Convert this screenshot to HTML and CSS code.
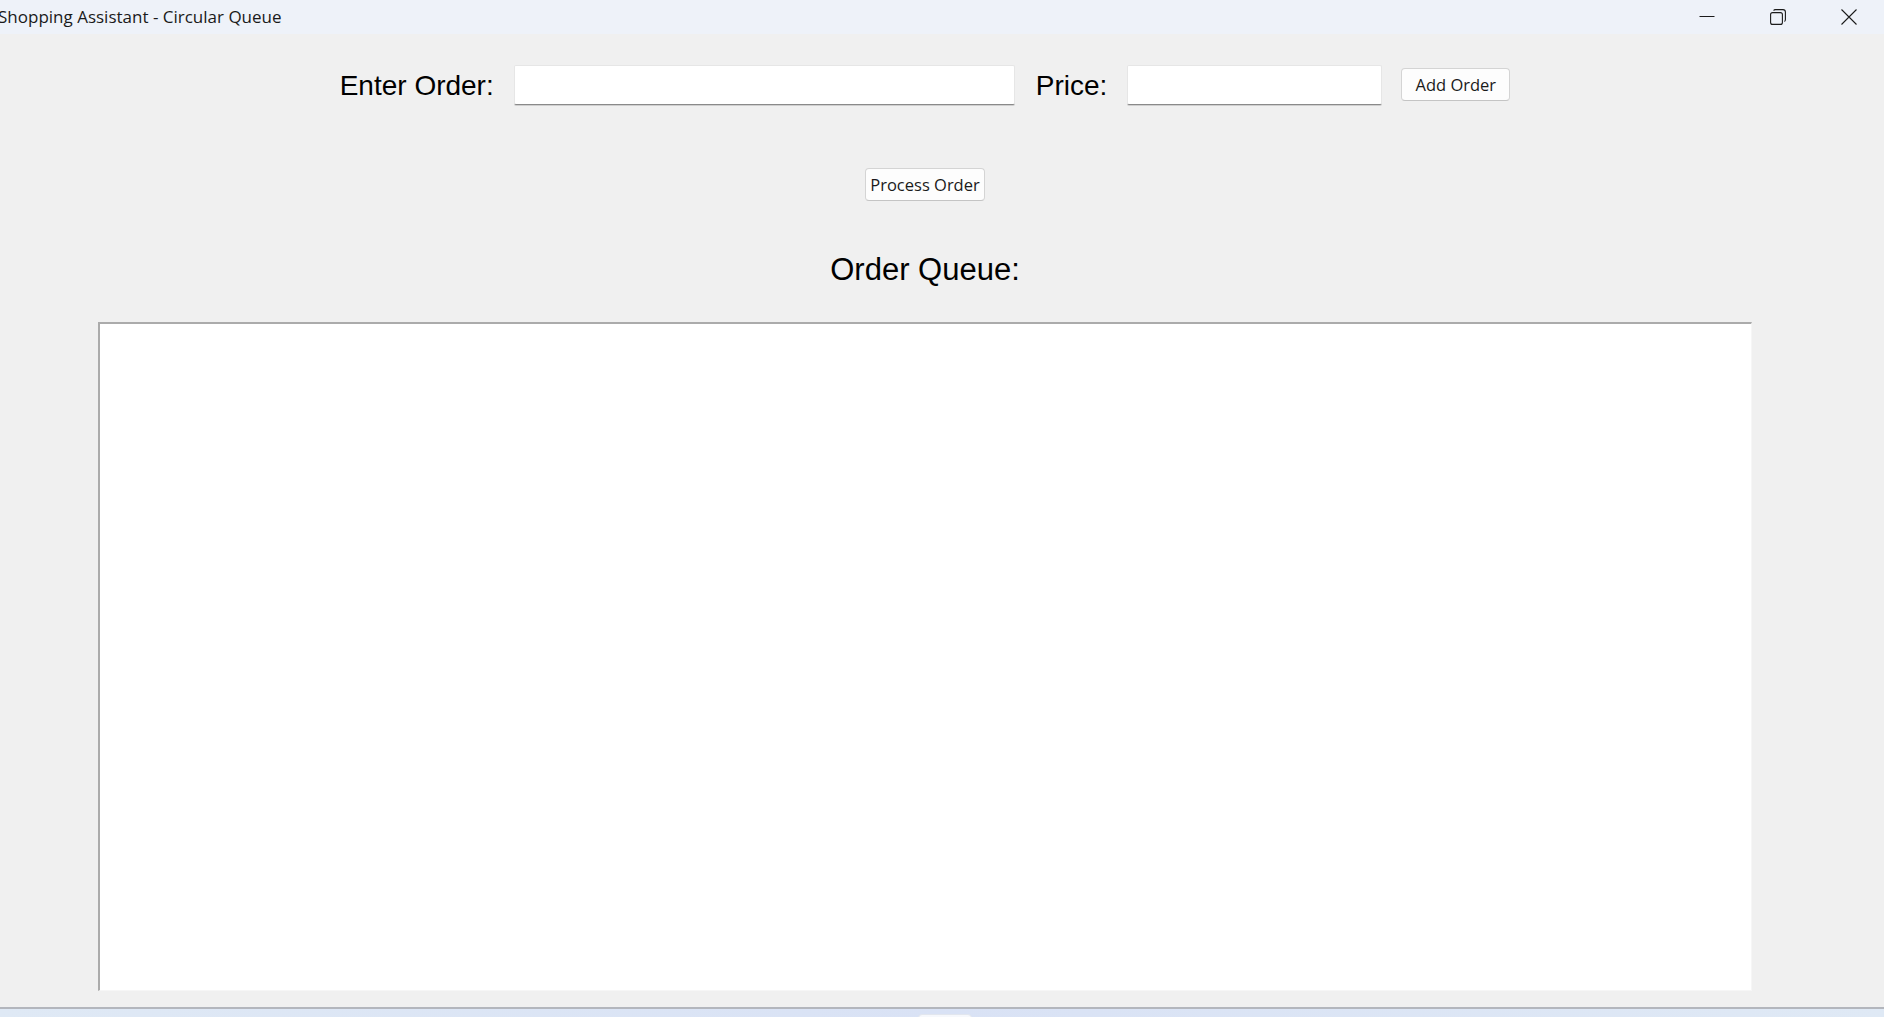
FILE: index.html
```html
<!DOCTYPE html>
<html lang="en">
<head>
<meta charset="utf-8">
<title>Shopping Assistant - Circular Queue</title>
<link rel="stylesheet" href="styles.css">
</head>
<body>
<div class="window">
  <header class="titlebar">
    <span class="title">Shopping Assistant - Circular Queue</span>
    <div class="controls">
      <span class="ctrl">
        <svg width="16" height="16" viewBox="0 0 16 16"><path d="M0.5 7.5H15.5" stroke="#1b1b1b" stroke-width="1" fill="none"/></svg>
      </span>
      <span class="ctrl">
        <svg width="16" height="16" viewBox="0 0 16 16" fill="none" stroke="#1b1b1b" stroke-width="1.1">
          <rect x="0.6" y="3.6" width="11.8" height="11.8" rx="2"/>
          <path d="M3.6 1.6 Q4 0.6 5.5 0.6 H13 Q15.4 0.6 15.4 3 V10.5 Q15.4 12 14.4 12.4"/>
        </svg>
      </span>
      <span class="ctrl">
        <svg width="16" height="16" viewBox="0 0 16 16"><path d="M0.5 0.5L15.5 15.5M15.5 0.5L0.5 15.5" stroke="#1b1b1b" stroke-width="1.1" fill="none"/></svg>
      </span>
    </div>
  </header>

  <main class="content">
    <div class="form-row">
      <label class="field-label" for="order">Enter Order:</label>
      <input class="entry entry-order" id="order" type="text">
      <label class="field-label" for="price">Price:</label>
      <input class="entry entry-price" id="price" type="text">
      <button class="btn btn-add" type="button">Add Order</button>
    </div>
    <button class="btn btn-process" type="button">Process Order</button>
    <h2 class="queue-title">Order Queue:</h2>
    <div class="listbox"></div>
  </main>

  <footer class="taskbar"><span class="task-item"></span></footer>
</div>
</body>
</html>
```

FILE: styles.css
```css
* { box-sizing: border-box; }
html, body { margin: 0; padding: 0; }
body {
  width: 1884px;
  height: 1017px;
  overflow: hidden;
  background: #f0f0f0;
  font-family: "Liberation Sans", Arial, sans-serif;
}
.window {
  display: flex;
  flex-direction: column;
  height: 1017px;
}
.titlebar {
  height: 34px;
  flex: 0 0 34px;
  background: #eef2f9;
  display: flex;
  align-items: center;
  justify-content: space-between;
  overflow: hidden;
}
.title {
  margin-left: -2px;
  margin-top: -2px;
  font-family: "Open Sans", "Noto Sans", sans-serif;
  font-size: 17px;
  color: #1a1a1a;
  white-space: nowrap;
}
.controls {
  display: flex;
  height: 100%;
}
.ctrl {
  width: 71px;
  height: 100%;
  display: flex;
  align-items: center;
  justify-content: center;
}
.content {
  flex: 1;
  width: 1850px;
  display: flex;
  flex-direction: column;
  align-items: center;
  padding-top: 31px;
}
.form-row {
  display: flex;
  align-items: center;
  height: 40px;
}
.field-label {
  font-size: 28px;
  line-height: 40px;
  padding-top: 1px;
  color: #000;
  margin-right: 20px;
  white-space: nowrap;
}
.entry {
  height: 40px;
  background: #fff;
  border: 1px solid #e6e6e6;
  border-bottom: 1px solid #8a8a8a;
  box-shadow: 0 1px 0 #cfcfcf;
  border-radius: 2px;
  outline: none;
  margin-right: 21px;
  padding: 0 6px;
  font-size: 18px;
}
.entry-order { width: 501px; }
.entry-price { width: 255px; margin-right: 19px; }
.btn {
  font-family: "Open Sans", "Noto Sans", sans-serif;
  font-size: 16.5px;
  color: #1a1a1a;
  background: #fdfdfd;
  border: 1px solid #d4d4d4;
  border-bottom-color: #c4c4c4;
  border-radius: 4px;
  height: 33px;
  padding: 0;
  display: flex;
  align-items: center;
  justify-content: center;
  white-space: nowrap;
}
.btn-add { width: 109px; margin-top: -2px; }
.btn-process {
  width: 120px;
  margin-top: 63px;
}
.queue-title {
  margin: 51px 0 0;
  font-size: 31px;
  line-height: 36px;
  font-weight: normal;
  color: #000;
}
.listbox {
  margin-top: 34px;
  width: 1654px;
  height: 669px;
  background: #fff;
  border-top: 2px solid #ababab;
  border-left: 2px solid #ababab;
  border-right: 1px solid #f6f6f6;
  border-bottom: 1px solid #f6f6f6;
}
.taskbar {
  flex: 0 0 10px;
  height: 10px;
  border-top: 2px solid #b3b6bd;
  background: linear-gradient(90deg, #dfe9f5 0%, #d9e2f5 50%, #dfe9f5 100%);
  display: flex;
  justify-content: center;
  overflow: hidden;
}
.task-item {
  width: 54px;
  height: 10px;
  margin-top: 5px;
  margin-left: 6px;
  background: #f6f8fc;
  border: 1px solid #e2e6ee;
  border-radius: 4px;
}
```
